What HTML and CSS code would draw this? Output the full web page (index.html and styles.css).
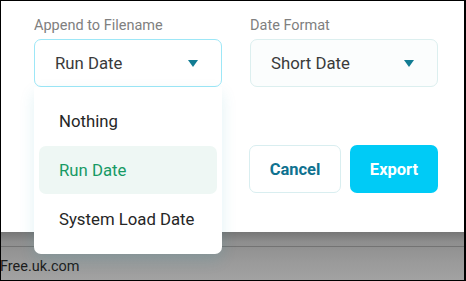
FILE: index.html
```html
<!DOCTYPE html>
<html>
<head>
<meta charset="utf-8">
<link rel="stylesheet" href="styles.css">
</head>
<body>
<div class="frame">
  <div class="modal">
    <div class="fields">
      <div class="field">
        <div class="label">Append to Filename</div>
        <div class="select open">
          <span>Run Date</span>
          <span class="caret"></span>
        </div>
      </div>
      <div class="field">
        <div class="label">Date Format</div>
        <div class="select">
          <span>Short Date</span>
          <span class="caret"></span>
        </div>
      </div>
    </div>
    <div class="actions">
      <button class="btn cancel">Cancel</button>
      <button class="btn export">Export</button>
    </div>
  </div>
  <div class="backdrop">
    <div class="rule"></div>
    <div class="site">Free.uk.com</div>
  </div>
  <ul class="menu">
    <li class="item">Nothing</li>
    <li class="item active">Run Date</li>
    <li class="item">System Load Date</li>
  </ul>
</div>
</body>
</html>
```

FILE: styles.css
```css
html, body {
  margin: 0;
  padding: 0;
}
body {
  width: 466px;
  height: 281px;
  overflow: hidden;
  font-family: Roboto, "Noto Sans", sans-serif;
}
.frame {
  position: relative;
  box-sizing: border-box;
  width: 466px;
  height: 281px;
  border-top: 1px solid #000;
  border-left: 1px solid #000;
  border-right: 2px solid #000;
  border-bottom: 1px solid #000;
  display: flex;
  flex-direction: column;
  background: #fff;
}
.modal {
  height: 231px;
  box-sizing: border-box;
  padding: 16px 26px 0 33px;
  background: #fff;
}
.fields {
  display: flex;
  gap: 28px;
}
.field {
  width: 188px;
  display: flex;
  flex-direction: column;
}
.label {
  font-size: 14.5px;
  line-height: 18px;
  color: #808080;
  margin-bottom: 4px;
}
.select {
  box-sizing: border-box;
  height: 48px;
  border: 1px solid #dcefef;
  border-radius: 7px;
  background: #fbfdfd;
  display: flex;
  align-items: center;
  justify-content: space-between;
  padding: 0 23px 0 20px;
  font-size: 16.75px;
  color: #3a3a3a;
}
.select.open {
  border-color: #9de7f7;
  background: #fff;
}
.caret {
  width: 0;
  height: 0;
  border-left: 5.5px solid transparent;
  border-right: 5.5px solid transparent;
  border-top: 7px solid #127c93;
  margin-top: 1px;
}
.actions {
  display: flex;
  justify-content: flex-end;
  gap: 9px;
  margin-top: 58px;
}
.btn {
  height: 48px;
  border-radius: 7px;
  font-family: Roboto, "Noto Sans", sans-serif;
  font-size: 16.5px;
  font-weight: 700;
  padding: 0;
  box-sizing: border-box;
}
.cancel {
  width: 92px;
  border: 1px solid #d9eef0;
  background: #fff;
  color: #0f7290;
}
.export {
  width: 88px;
  border: none;
  background: #00cbf6;
  color: #fff;
}
.backdrop {
  flex: 1;
  position: relative;
  background: linear-gradient(#767676 0px, #8e8e8e 10px, #9a9a9a 30px, #a2a2a2 48px);
}
.rule {
  height: 1px;
  background: #737373;
  margin-top: 14px;
}
.site {
  font-size: 14.5px;
  color: #1d1d1d;
  margin-top: 11px;
  margin-left: -1px;
  line-height: 18px;
}
.menu {
  position: absolute;
  left: 33px;
  top: 86px;
  width: 188px;
  height: 167px;
  box-sizing: border-box;
  margin: 0;
  list-style: none;
  padding: 10px 5px 10px;
  display: flex;
  flex-direction: column;
  gap: 1px;
  background: #fff;
  border-radius: 0 0 7px 7px;
  box-shadow: 0 6px 16px rgba(0, 150, 170, 0.12);
}
.item {
  height: 48px;
  display: flex;
  align-items: center;
  padding-left: 20px;
  font-size: 16.75px;
  color: #262626;
  border-radius: 7px;
}
.item.active {
  background: #eef7f4;
  color: #179a64;
}
```
